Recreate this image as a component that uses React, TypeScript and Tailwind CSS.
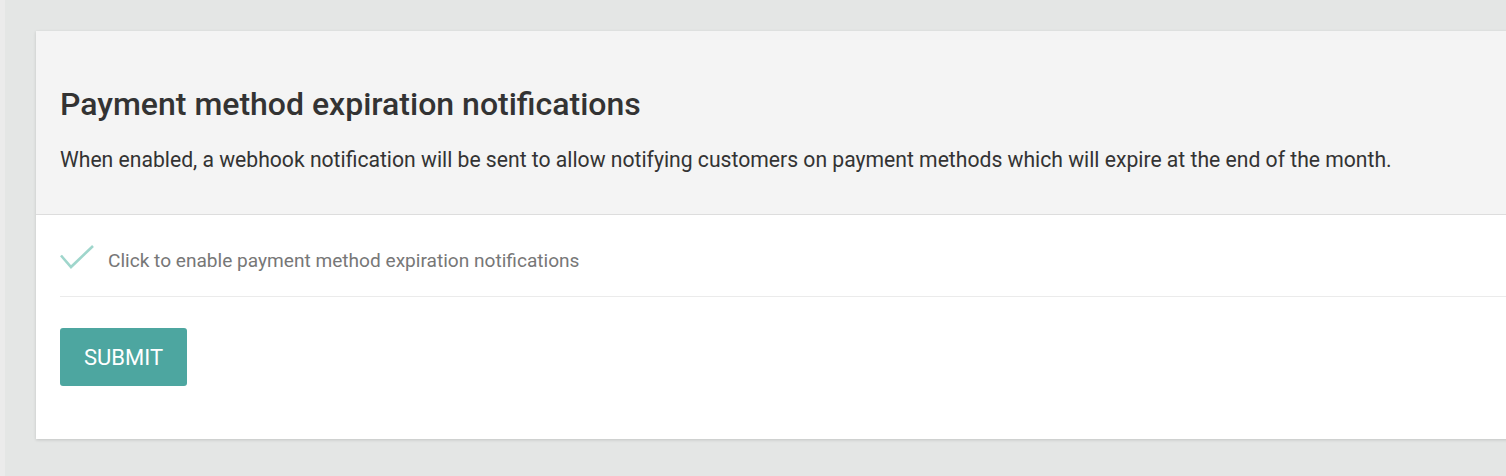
export default function App() {
  return (
    <div className="w-[1506px] h-[476px] overflow-hidden bg-[#e4e6e5] flex font-['Roboto',sans-serif]">
      <div className="w-[5px] h-full bg-[#ebebeb] shrink-0" />
      <div className="flex-1 pl-[31px] pt-[31px]">
        <div className="w-[1500px] bg-white shadow-[0_1px_3px_rgba(0,0,0,0.15)]">
          <div className="bg-[#f4f4f4] border-b border-[#dddddd] px-6 pt-[54px] pb-[40px]">
            <h2 className="text-[32px] leading-[38px] font-medium text-[#333333]">
              Payment method expiration notifications
            </h2>
            <p className="mt-[23px] text-[21.15px] leading-[28px] text-[#333333]">
              When enabled, a webhook notification will be sent to allow notifying customers on payment methods which
              will expire at the end of the month.
            </p>
          </div>
          <div className="px-6 pb-[53px]">
            <label className="flex items-center gap-[14px] h-[82px] pt-[12px] border-b border-[#ebebeb]">
              <svg width="34" height="25" viewBox="0 0 34 25" className="shrink-0 -mt-[9px]">
                <path d="M1 10.5 L11 22 L33 1" fill="none" stroke="#9fd6cc" strokeWidth="2.6" />
              </svg>
              <span className="text-[19.1px] text-[#777777]">Click to enable payment method expiration notifications</span>
            </label>
            <button className="mt-[31px] h-[58px] w-[127px] rounded-[3px] bg-[#4da6a0] text-white text-[22px]">
              SUBMIT
            </button>
          </div>
        </div>
      </div>
    </div>
  );
}
